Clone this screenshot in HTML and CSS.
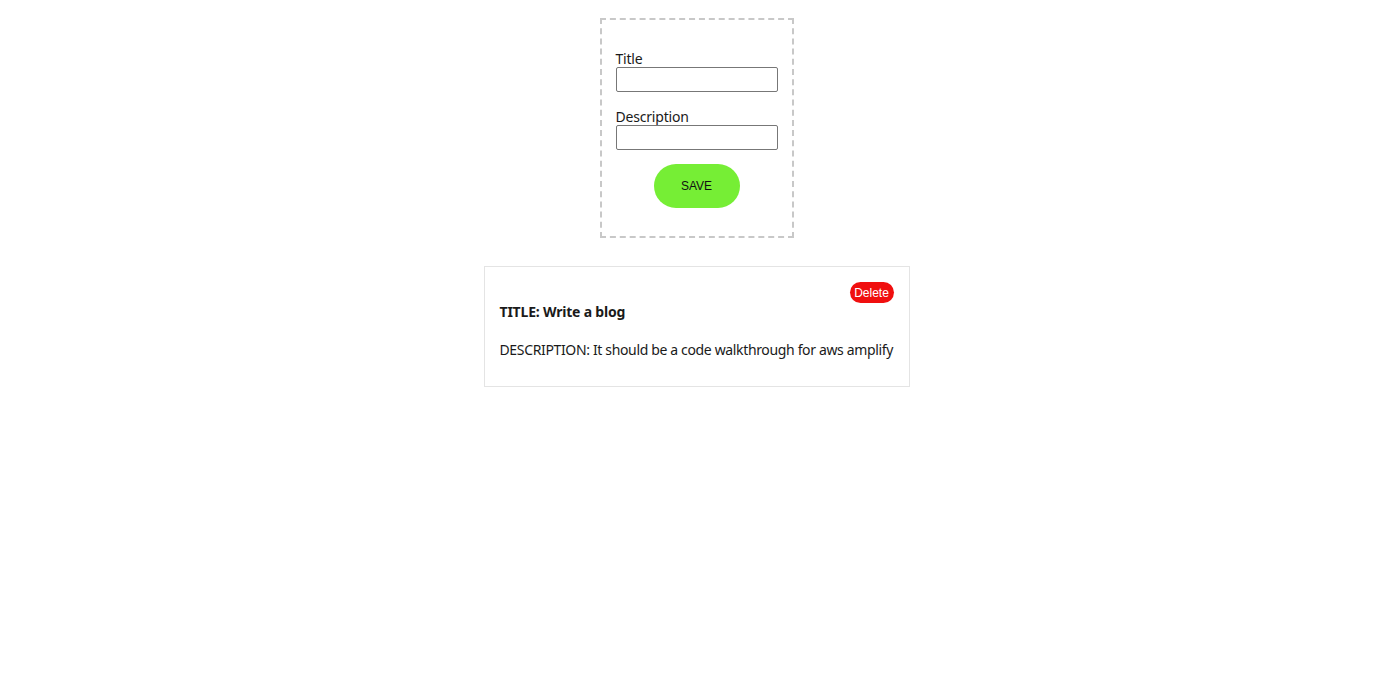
FILE: index.html
```html
<!DOCTYPE html>
<html>
<head>
<meta charset="utf-8">
<link rel="stylesheet" href="styles.css">
</head>
<body>
<div class="app">
  <form class="todo-form">
    <label class="field">
      <span class="field-label">Title</span>
      <input class="field-input" type="text">
    </label>
    <label class="field">
      <span class="field-label">Description</span>
      <input class="field-input" type="text">
    </label>
    <button type="button" class="save-btn">SAVE</button>
  </form>
  <div class="todo-card">
    <div class="card-top"><button type="button" class="delete-btn">Delete</button></div>
    <p class="todo-title">TITLE: Write a blog</p>
    <p class="todo-desc">DESCRIPTION: It should be a code walkthrough for aws amplify</p>
  </div>
</div>
</body>
</html>
```

FILE: styles.css
```css
html, body {
  margin: 0;
  padding: 0;
  background: #fff;
}
body {
  font-family: "Noto Sans", "Open Sans", sans-serif;
  color: #1a1a1a;
}
.app {
  display: flex;
  flex-direction: column;
  align-items: center;
  padding: 18px 7px 0 0;
}
.todo-form {
  box-sizing: border-box;
  width: 194px;
  height: 220px;
  border: 2px dashed #c8c8c8;
  padding: 30px 14px 0 14px;
  display: flex;
  flex-direction: column;
  gap: 16px;
}
.field {
  display: flex;
  flex-direction: column;
}
.field + .save-btn {
  margin-top: -2px;
}
.field-label {
  font-size: 14px;
  line-height: 17px;
  letter-spacing: -0.2px;
}
.field-input {
  box-sizing: border-box;
  width: 162px;
  height: 25px;
  margin: 0;
  border: 1px solid #777;
  border-radius: 2px;
  padding: 2px 4px;
}
.save-btn {
  align-self: center;
  width: 86px;
  height: 44px;
  border: none;
  border-radius: 22px;
  background: #76ee35;
  color: #111;
  font-family: "Liberation Sans", Arial, sans-serif;
  font-size: 12px;
  cursor: pointer;
}
.todo-card {
  box-sizing: border-box;
  width: 426px;
  height: 121px;
  margin-top: 28px;
  border: 1px solid #e4e4e4;
  padding: 15px 15px 0 15px;
}
.card-top {
  display: flex;
  justify-content: flex-end;
  height: 20px;
}
.delete-btn {
  width: 44px;
  height: 21px;
  border: none;
  border-radius: 11px;
  background: #f00f0f;
  color: #fff;
  font-family: "Liberation Sans", Arial, sans-serif;
  font-size: 12px;
  padding: 0;
}
.todo-title {
  margin: 0;
  font-weight: bold;
  font-size: 14px;
  line-height: 19px;
  letter-spacing: -0.2px;
}
.todo-desc {
  margin: 19px 0 0 0;
  font-size: 14px;
  line-height: 19px;
  letter-spacing: -0.35px;
  white-space: nowrap;
}
```
